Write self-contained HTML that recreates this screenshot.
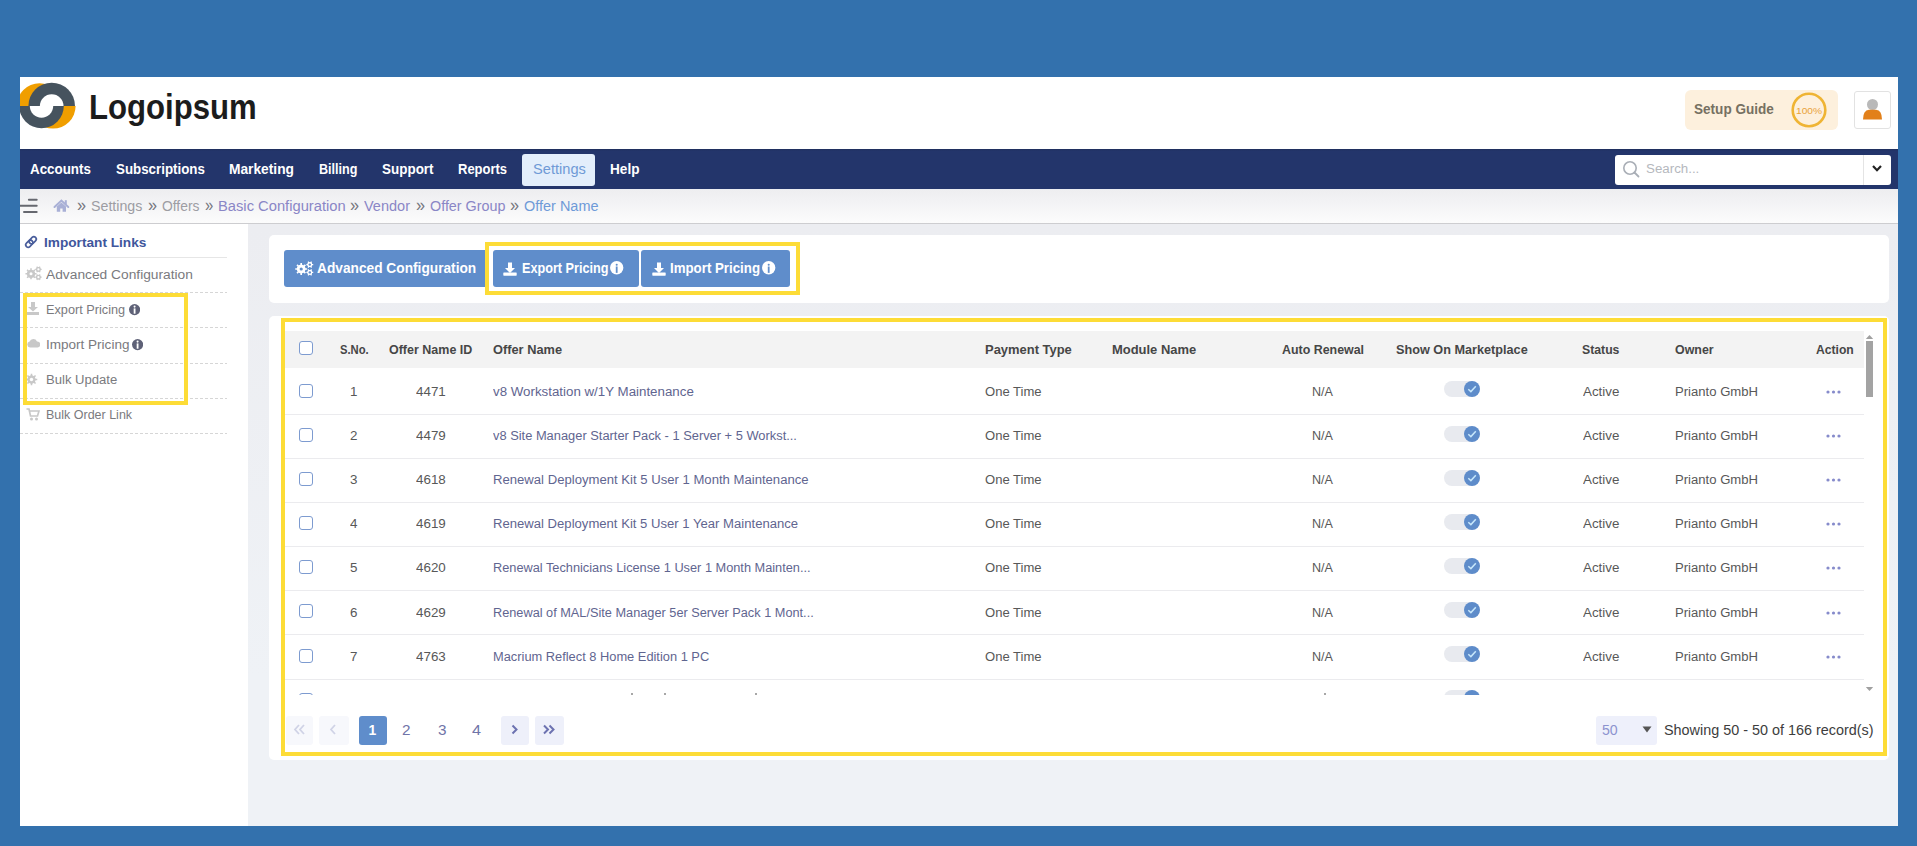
<!DOCTYPE html>
<html><head><meta charset="utf-8">
<style>
*{margin:0;padding:0;box-sizing:border-box}
html,body{width:1917px;height:846px;overflow:hidden;background:#3371ad;font-family:"Liberation Sans",sans-serif}
.a{position:absolute}
.t{position:absolute;white-space:nowrap;transform-origin:0 0}
#frame{position:absolute;left:20px;top:77px;width:1878px;height:749px;background:linear-gradient(#ecedf1 150px,#eff2f6 600px);overflow:hidden}
</style></head>
<body>
<div id="frame">
<div class="a" style="left:0.00px;top:0.00px;width:1878.00px;height:73.00px;background:#fff"></div>
<svg class="a" style="left:-2.00px;top:1.00px" width="62" height="56" viewBox="0 0 62 56">
<defs><clipPath id="ct"><rect x="0" y="0" width="62" height="28"/></clipPath><clipPath id="cb"><rect x="0" y="28" width="62" height="28"/></clipPath></defs>
<g clip-path="url(#ct)"><circle cx="21.5" cy="28" r="22.8" fill="#f09e00"/><circle cx="33.7" cy="28" r="23.3" fill="#46535e"/><circle cx="33.7" cy="28" r="11.8" fill="#fff"/></g>
<g clip-path="url(#cb)"><circle cx="35" cy="28" r="22.6" fill="#f09e00"/><circle cx="23.5" cy="28" r="22.3" fill="#46535e"/><circle cx="23.5" cy="28" r="11.7" fill="#fff"/></g>
</svg>
<div class="t" style="left:69.00px;top:12.10px;font-size:35.32px;line-height:35.32px;font-weight:bold;color:#1c1c1c;transform:scaleX(0.882);letter-spacing:0px">Logoipsum</div>
<div class="a" style="left:1665.00px;top:13.00px;width:153.00px;height:40.00px;background:#fdf0dd;border-radius:6px"></div>
<div class="t" style="left:1674.00px;top:24.50px;font-size:14.53px;line-height:14.53px;font-weight:bold;color:#767062;transform:scaleX(0.934);">Setup Guide</div>
<svg class="a" style="left:1771.00px;top:15.00px" width="36" height="36" viewBox="0 0 36 36"><circle cx="18" cy="18" r="16.3" fill="none" stroke="#efb434" stroke-width="2.6"/><text x="18" y="21.5" text-anchor="middle" font-family="Liberation Sans" font-size="9.5" fill="#e9a23a" textLength="26" lengthAdjust="spacingAndGlyphs">100%</text></svg>
<div class="a" style="left:1834.00px;top:14.00px;width:37.00px;height:37.50px;background:#fff;border:1px solid #e2e2e2;border-radius:3px"></div>
<svg class="a" style="left:1842.00px;top:20.00px" width="21" height="24" viewBox="0 0 21 24"><circle cx="10.5" cy="7.5" r="5.5" fill="#b9b9b9"/><path d="M1,22.5 Q1,13.5 7,12.8 L14,12.8 Q20,13.5 20,22.5 Z" fill="#e2801a"/></svg>
<div class="a" style="left:0.00px;top:72.40px;width:1878.00px;height:40.10px;background:linear-gradient(#1f2e5c,#23356b 2px)"></div>
<div class="a" style="left:501.60px;top:76.80px;width:73.20px;height:31.90px;background:#e3eefb;border-radius:3px"></div>
<div class="t" style="left:10.00px;top:85.10px;font-size:14.53px;line-height:14.53px;font-weight:bold;color:#ffffff;transform:scaleX(0.921);">Accounts</div>
<div class="t" style="left:95.50px;top:85.10px;font-size:14.53px;line-height:14.53px;font-weight:bold;color:#ffffff;transform:scaleX(0.918);">Subscriptions</div>
<div class="t" style="left:208.70px;top:85.10px;font-size:14.53px;line-height:14.53px;font-weight:bold;color:#ffffff;transform:scaleX(0.948);">Marketing</div>
<div class="t" style="left:298.80px;top:85.10px;font-size:14.53px;line-height:14.53px;font-weight:bold;color:#ffffff;transform:scaleX(0.867);">Billing</div>
<div class="t" style="left:362.00px;top:85.10px;font-size:14.53px;line-height:14.53px;font-weight:bold;color:#ffffff;transform:scaleX(0.927);">Support</div>
<div class="t" style="left:438.30px;top:85.10px;font-size:14.53px;line-height:14.53px;font-weight:bold;color:#ffffff;transform:scaleX(0.895);">Reports</div>
<div class="t" style="left:589.50px;top:85.10px;font-size:14.53px;line-height:14.53px;font-weight:bold;color:#ffffff;transform:scaleX(0.937);">Help</div>
<div class="t" style="left:512.50px;top:85.10px;font-size:14.53px;line-height:14.53px;font-weight:normal;color:#6f9ad6;transform:scaleX(1.007);font-weight:normal">Settings</div>
<div class="a" style="left:1595.00px;top:78.00px;width:275.50px;height:29.50px;background:#fff;border-radius:3px"></div>
<div class="a" style="left:1843.00px;top:78.00px;width:1.00px;height:29.50px;background:#e4e4e4"></div>
<svg class="a" style="left:1602.00px;top:83.00px" width="19" height="19" viewBox="0 0 19 19"><circle cx="8" cy="8" r="6.2" fill="none" stroke="#a9aeb6" stroke-width="1.6"/><path d="M12.5,12.5 L16.5,16.5" stroke="#a9aeb6" stroke-width="1.8" stroke-linecap="round"/></svg>
<div class="t" style="left:1626.30px;top:85.43px;font-size:13.66px;line-height:13.66px;font-weight:normal;color:#b5b8bd;transform:scaleX(0.975);">Search...</div>
<svg class="a" style="left:1851.00px;top:87.00px" width="12" height="9" viewBox="0 0 12 9"><path d="M2,2 L6,6.2 L10,2" fill="none" stroke="#222" stroke-width="2.2"/></svg>
<div class="a" style="left:0.00px;top:112.50px;width:1878.00px;height:33.50px;background:linear-gradient(#eeeef0,#f3f3f5 40%,#fcfcfc)"></div>
<div class="a" style="left:0.00px;top:146.00px;width:1878.00px;height:1.00px;background:#cdcdd0"></div>
<svg class="a" style="left:-2.00px;top:119.00px" width="22" height="19" viewBox="0 0 22 19"><g stroke="#66686f" stroke-width="2" stroke-linecap="round"><path d="M10.9,3.8 L18.7,3.8"/><path d="M1,9.7 L18.7,9.7"/><path d="M6,15.9 L18.7,15.9"/></g></svg>
<svg class="a" style="left:33.00px;top:121.00px" width="17" height="15" viewBox="0 0 17 15"><path d="M1.5,9 L8.4,2.6 L15.3,9" fill="none" stroke="#a9b0d6" stroke-width="2" stroke-linecap="round"/><rect x="11.8" y="2.2" width="2" height="4" fill="#a9b0d6"/><path d="M3.8,8.6 L8.4,4.5 L13,8.6 L13,13.7 L9.6,13.7 L9.6,10.6 L7.2,10.6 L7.2,13.7 L3.8,13.7 Z" fill="#a9b0d6"/></svg>
<div class="t" style="left:57.00px;top:119.32px;font-size:18.17px;line-height:18.17px;font-weight:normal;color:#77777f;transform:scaleX(0.893);">»</div>
<div class="t" style="left:71.00px;top:122.51px;font-size:13.81px;line-height:13.81px;font-weight:normal;color:#9d9da3;transform:scaleX(1.030);">Settings</div>
<div class="t" style="left:128.00px;top:119.32px;font-size:18.17px;line-height:18.17px;font-weight:normal;color:#77777f;transform:scaleX(0.893);">»</div>
<div class="t" style="left:141.50px;top:122.51px;font-size:13.81px;line-height:13.81px;font-weight:normal;color:#9d9da3;transform:scaleX(1.004);">Offers</div>
<div class="t" style="left:184.80px;top:119.32px;font-size:18.17px;line-height:18.17px;font-weight:normal;color:#77777f;transform:scaleX(0.813);">»</div>
<div class="t" style="left:198.30px;top:122.51px;font-size:13.81px;line-height:13.81px;font-weight:normal;color:#8a86c6;transform:scaleX(1.067);">Basic Configuration</div>
<div class="t" style="left:330.00px;top:119.32px;font-size:18.17px;line-height:18.17px;font-weight:normal;color:#77777f;transform:scaleX(0.893);">»</div>
<div class="t" style="left:344.00px;top:122.51px;font-size:13.81px;line-height:13.81px;font-weight:normal;color:#8a86c6;transform:scaleX(1.051);">Vendor</div>
<div class="t" style="left:396.00px;top:119.32px;font-size:18.17px;line-height:18.17px;font-weight:normal;color:#77777f;transform:scaleX(0.893);">»</div>
<div class="t" style="left:409.50px;top:122.51px;font-size:13.81px;line-height:13.81px;font-weight:normal;color:#8a86c6;transform:scaleX(1.040);">Offer Group</div>
<div class="t" style="left:490.00px;top:119.32px;font-size:18.17px;line-height:18.17px;font-weight:normal;color:#77777f;transform:scaleX(0.893);">»</div>
<div class="t" style="left:504.00px;top:122.51px;font-size:13.81px;line-height:13.81px;font-weight:normal;color:#6e9ad8;transform:scaleX(1.048);">Offer Name</div>
<div class="a" style="left:0.00px;top:147.00px;width:227.50px;height:602.00px;background:#fff"></div>
<svg class="a" style="left:3.00px;top:157.00px" width="16" height="16" viewBox="0 0 16 16"><g transform="rotate(-45 8 8)" fill="none" stroke="#4a5e9c" stroke-width="1.7"><rect x="1.6" y="5.6" width="8" height="4.8" rx="2.4"/><rect x="6.4" y="5.6" width="8" height="4.8" rx="2.4"/></g></svg>
<div class="t" style="left:24.20px;top:158.86px;font-size:13.52px;line-height:13.52px;font-weight:bold;color:#40569c;transform:scaleX(1.010);">Important Links</div>
<div class="a" style="left:0.00px;top:180.00px;width:206.60px;height:1.30px;background:#e6e6e6"></div>
<div class="t" style="left:26.00px;top:191.90px;font-size:12.65px;line-height:12.65px;font-weight:normal;color:#7a7a7e;transform:scaleX(1.089);">Advanced Configuration</div>
<div class="t" style="left:26.00px;top:226.50px;font-size:12.65px;line-height:12.65px;font-weight:normal;color:#7a7a7e;transform:scaleX(1.006);">Export Pricing</div>
<div class="t" style="left:25.70px;top:261.60px;font-size:12.65px;line-height:12.65px;font-weight:normal;color:#7a7a7e;transform:scaleX(1.070);">Import Pricing</div>
<div class="t" style="left:26.00px;top:296.70px;font-size:12.65px;line-height:12.65px;font-weight:normal;color:#7a7a7e;transform:scaleX(1.035);">Bulk Update</div>
<div class="t" style="left:26.00px;top:331.90px;font-size:12.65px;line-height:12.65px;font-weight:normal;color:#7a7a7e;transform:scaleX(0.988);">Bulk Order Link</div>
<div class="a" style="left:0.00px;top:215.00px;width:207.00px;height:1.00px;background-image:linear-gradient(90deg,#d6d6d6 60%,transparent 60%);background-size:5px 1px"></div>
<div class="a" style="left:0.00px;top:250.00px;width:207.00px;height:1.00px;background-image:linear-gradient(90deg,#d6d6d6 60%,transparent 60%);background-size:5px 1px"></div>
<div class="a" style="left:0.00px;top:286.00px;width:207.00px;height:1.00px;background-image:linear-gradient(90deg,#d6d6d6 60%,transparent 60%);background-size:5px 1px"></div>
<div class="a" style="left:0.00px;top:321.00px;width:207.00px;height:1.00px;background-image:linear-gradient(90deg,#d6d6d6 60%,transparent 60%);background-size:5px 1px"></div>
<div class="a" style="left:0.00px;top:356.00px;width:207.00px;height:1.00px;background-image:linear-gradient(90deg,#d6d6d6 60%,transparent 60%);background-size:5px 1px"></div>
<svg class="a" style="left:5.00px;top:189.00px" width="17" height="15" viewBox="0 0 17 15"><path d="M9.92,7.02 L11.55,7.03 L11.55,8.57 L9.92,8.58 L9.33,10.02 L10.46,11.18 L9.38,12.26 L8.22,11.13 L6.78,11.72 L6.77,13.35 L5.23,13.35 L5.22,11.72 L3.78,11.13 L2.62,12.26 L1.54,11.18 L2.67,10.02 L2.08,8.58 L0.45,8.57 L0.45,7.03 L2.08,7.02 L2.67,5.58 L1.54,4.42 L2.62,3.34 L3.78,4.47 L5.22,3.88 L5.23,2.25 L6.77,2.25 L6.78,3.88 L8.22,4.47 L9.38,3.34 L10.46,4.42 L9.33,5.58 Z" fill="#c8c8c8"/><circle cx="6" cy="7.8" r="3.92" fill="#c8c8c8"/><circle cx="6" cy="7.8" r="1.5" fill="#fff"/><path d="M15.72,2.78 L16.64,2.80 L16.64,4.00 L15.72,4.02 L15.10,5.10 L15.54,5.91 L14.50,6.51 L14.02,5.72 L12.78,5.72 L12.30,6.51 L11.26,5.91 L11.70,5.10 L11.08,4.02 L10.16,4.00 L10.16,2.80 L11.08,2.78 L11.70,1.70 L11.26,0.89 L12.30,0.29 L12.78,1.08 L14.02,1.08 L14.50,0.29 L15.54,0.89 L15.10,1.70 Z" fill="#c8c8c8"/><circle cx="13.4" cy="3.4" r="2.35" fill="#c8c8c8"/><circle cx="13.4" cy="3.4" r="1.1" fill="#fff"/><path d="M15.72,10.58 L16.64,10.60 L16.64,11.80 L15.72,11.82 L15.10,12.90 L15.54,13.71 L14.50,14.31 L14.02,13.52 L12.78,13.52 L12.30,14.31 L11.26,13.71 L11.70,12.90 L11.08,11.82 L10.16,11.80 L10.16,10.60 L11.08,10.58 L11.70,9.50 L11.26,8.69 L12.30,8.09 L12.78,8.88 L14.02,8.88 L14.50,8.09 L15.54,8.69 L15.10,9.50 Z" fill="#c8c8c8"/><circle cx="13.4" cy="11.2" r="2.35" fill="#c8c8c8"/><circle cx="13.4" cy="11.2" r="1.1" fill="#fff"/></svg>
<svg class="a" style="left:7.00px;top:225.00px" width="12" height="13" viewBox="0 0 12 13"><path d="M4,0 L8,0 L8,5 L11,5 L6,9.5 L1,5 L4,5 Z" fill="#c8c8c8"/><rect x="0" y="10" width="12" height="3" fill="#c8c8c8"/></svg>
<svg class="a" style="left:7.00px;top:261.00px" width="13" height="10" viewBox="0 0 13 10"><path d="M3,9.5 A3,3 0 0 1 2.6,3.6 A4,4 0 0 1 10,3.5 A3,3 0 0 1 10.5,9.5 Z" fill="#c8c8c8"/></svg>
<svg class="a" style="left:5.00px;top:296.00px" width="14" height="14" viewBox="0 0 14 14"><path d="M10.42,5.72 L12.25,5.71 L12.25,7.29 L10.42,7.28 L9.83,8.72 L11.12,10.00 L10.00,11.12 L8.72,9.83 L7.28,10.42 L7.29,12.25 L5.71,12.25 L5.72,10.42 L4.28,9.83 L3.00,11.12 L1.88,10.00 L3.17,8.72 L2.58,7.28 L0.75,7.29 L0.75,5.71 L2.58,5.72 L3.17,4.28 L1.88,3.00 L3.00,1.88 L4.28,3.17 L5.72,2.58 L5.71,0.75 L7.29,0.75 L7.28,2.58 L8.72,3.17 L10.00,1.88 L11.12,3.00 L9.83,4.28 Z" fill="#c8c8c8"/><circle cx="6.5" cy="6.5" r="3.92" fill="#c8c8c8"/><circle cx="6.5" cy="6.5" r="1.7" fill="#fff"/></svg>
<svg class="a" style="left:6.00px;top:331.00px" width="14" height="13" viewBox="0 0 14 13"><path d="M0.5,1 L3,1 L4.5,8 L11.5,8 L13,3 L3.8,3" fill="none" stroke="#c8c8c8" stroke-width="1.7"/><circle cx="5.5" cy="11" r="1.5" fill="#c8c8c8"/><circle cx="10.5" cy="11" r="1.5" fill="#c8c8c8"/></svg>
<svg class="a" style="left:108.60px;top:227.40px" width="11.2" height="11.2" viewBox="0 0 11.2 11.2"><circle cx="5.6" cy="5.6" r="5.6" fill="#5e6177"/><rect x="4.699999999999999" y="4.3999999999999995" width="1.8" height="5.32" fill="#fff"/><circle cx="5.6" cy="2.5999999999999996" r="1.05" fill="#fff"/></svg>
<svg class="a" style="left:111.90px;top:262.40px" width="11.2" height="11.2" viewBox="0 0 11.2 11.2"><circle cx="5.6" cy="5.6" r="5.6" fill="#5e6177"/><rect x="4.699999999999999" y="4.3999999999999995" width="1.8" height="5.32" fill="#fff"/><circle cx="5.6" cy="2.5999999999999996" r="1.05" fill="#fff"/></svg>
<div class="a" style="left:249.40px;top:158.40px;width:1620.10px;height:67.40px;background:#fff;border-radius:5px"></div>
<div class="a" style="left:249.40px;top:239.00px;width:1620.10px;height:443.70px;background:#fff;border-radius:5px"></div>
<div class="a" style="left:264.40px;top:173.20px;width:202.60px;height:36.70px;background:#5f8dcb;border-radius:3px 0 0 3px"></div>
<div class="a" style="left:472.70px;top:173.20px;width:146.30px;height:36.70px;background:#5f8dcb;border-radius:3px"></div>
<div class="a" style="left:621.40px;top:173.20px;width:149.00px;height:36.70px;background:#5f8dcb;border-radius:3px"></div>
<div class="t" style="left:296.50px;top:184.17px;font-size:14.10px;line-height:14.10px;font-weight:bold;color:#fff;transform:scaleX(0.973);font-weight:bold">Advanced Configuration</div>
<div class="t" style="left:501.50px;top:184.17px;font-size:14.10px;line-height:14.10px;font-weight:bold;color:#fff;transform:scaleX(0.898);">Export Pricing</div>
<div class="t" style="left:649.70px;top:184.17px;font-size:14.10px;line-height:14.10px;font-weight:bold;color:#fff;transform:scaleX(0.942);">Import Pricing</div>
<svg class="a" style="left:274.50px;top:184.00px" width="19" height="15" viewBox="0 0 19 15"><path d="M10.42,7.16 L12.14,7.18 L12.14,8.82 L10.42,8.84 L9.78,10.39 L10.98,11.62 L9.82,12.78 L8.59,11.58 L7.04,12.22 L7.02,13.94 L5.38,13.94 L5.36,12.22 L3.81,11.58 L2.58,12.78 L1.42,11.62 L2.62,10.39 L1.98,8.84 L0.26,8.82 L0.26,7.18 L1.98,7.16 L2.62,5.61 L1.42,4.38 L2.58,3.22 L3.81,4.42 L5.36,3.78 L5.38,2.06 L7.02,2.06 L7.04,3.78 L8.59,4.42 L9.82,3.22 L10.98,4.38 L9.78,5.61 Z" fill="#fff"/><circle cx="6.2" cy="8" r="4.21" fill="#fff"/><circle cx="6.2" cy="8" r="1.6" fill="#5f8dcb"/><path d="M17.21,2.95 L18.24,2.96 L18.24,4.24 L17.21,4.25 L16.57,5.37 L17.07,6.26 L15.97,6.90 L15.45,6.01 L14.15,6.01 L13.63,6.90 L12.53,6.26 L13.03,5.37 L12.39,4.25 L11.36,4.24 L11.36,2.96 L12.39,2.95 L13.03,1.83 L12.53,0.94 L13.63,0.30 L14.15,1.19 L15.45,1.19 L15.97,0.30 L17.07,0.94 L16.57,1.83 Z" fill="#fff"/><circle cx="14.8" cy="3.6" r="2.45" fill="#fff"/><circle cx="14.8" cy="3.6" r="1.2" fill="#5f8dcb"/><path d="M17.21,10.75 L18.24,10.76 L18.24,12.04 L17.21,12.05 L16.57,13.17 L17.07,14.06 L15.97,14.70 L15.45,13.81 L14.15,13.81 L13.63,14.70 L12.53,14.06 L13.03,13.17 L12.39,12.05 L11.36,12.04 L11.36,10.76 L12.39,10.75 L13.03,9.63 L12.53,8.74 L13.63,8.10 L14.15,8.99 L15.45,8.99 L15.97,8.10 L17.07,8.74 L16.57,9.63 Z" fill="#fff"/><circle cx="14.8" cy="11.4" r="2.45" fill="#fff"/><circle cx="14.8" cy="11.4" r="1.2" fill="#5f8dcb"/></svg>
<svg class="a" style="left:483.40px;top:184.50px" width="14" height="14" viewBox="0 0 14 14"><path d="M5,0.5 L9,0.5 L9,6 L12,6 L7,11 L2,6 L5,6 Z" fill="#fff"/><rect x="0.3" y="10.5" width="13.4" height="3.2" rx="0.6" fill="#fff"/></svg>
<svg class="a" style="left:631.50px;top:184.50px" width="14" height="14" viewBox="0 0 14 14"><path d="M5,0.5 L9,0.5 L9,6 L12,6 L7,11 L2,6 L5,6 Z" fill="#fff"/><rect x="0.3" y="10.5" width="13.4" height="3.2" rx="0.6" fill="#fff"/></svg>
<svg class="a" style="left:590.30px;top:184.30px" width="13.4" height="13.4" viewBox="0 0 13.4 13.4"><circle cx="6.7" cy="6.7" r="6.7" fill="#fff"/><rect x="5.8" y="5.5" width="1.8" height="6.37" fill="#5f8dcb"/><circle cx="6.7" cy="3.7" r="1.05" fill="#5f8dcb"/></svg>
<svg class="a" style="left:742.30px;top:184.30px" width="13.4" height="13.4" viewBox="0 0 13.4 13.4"><circle cx="6.7" cy="6.7" r="6.7" fill="#fff"/><rect x="5.8" y="5.5" width="1.8" height="6.37" fill="#5f8dcb"/><circle cx="6.7" cy="3.7" r="1.05" fill="#5f8dcb"/></svg>
<div class="a" style="left:265.00px;top:253.50px;width:1578.80px;height:37.70px;background:#f3f3f3"></div>
<div class="t" style="left:319.60px;top:265.73px;font-size:13.08px;line-height:13.08px;font-weight:bold;color:#464646;transform:scaleX(0.859);">S.No.</div>
<div class="t" style="left:369.00px;top:265.73px;font-size:13.08px;line-height:13.08px;font-weight:bold;color:#464646;transform:scaleX(0.955);">Offer Name ID</div>
<div class="t" style="left:472.80px;top:265.73px;font-size:13.08px;line-height:13.08px;font-weight:bold;color:#464646;transform:scaleX(0.979);">Offer Name</div>
<div class="t" style="left:964.90px;top:265.73px;font-size:13.08px;line-height:13.08px;font-weight:bold;color:#464646;transform:scaleX(0.990);">Payment Type</div>
<div class="t" style="left:1091.80px;top:265.73px;font-size:13.08px;line-height:13.08px;font-weight:bold;color:#464646;transform:scaleX(0.990);">Module Name</div>
<div class="t" style="left:1261.50px;top:265.73px;font-size:13.08px;line-height:13.08px;font-weight:bold;color:#464646;transform:scaleX(0.949);">Auto Renewal</div>
<div class="t" style="left:1376.20px;top:265.73px;font-size:13.08px;line-height:13.08px;font-weight:bold;color:#464646;transform:scaleX(0.969);">Show On Marketplace</div>
<div class="t" style="left:1562.00px;top:265.73px;font-size:13.08px;line-height:13.08px;font-weight:bold;color:#464646;transform:scaleX(0.936);">Status</div>
<div class="t" style="left:1654.70px;top:265.73px;font-size:13.08px;line-height:13.08px;font-weight:bold;color:#464646;transform:scaleX(0.949);">Owner</div>
<div class="t" style="left:1795.60px;top:265.73px;font-size:13.08px;line-height:13.08px;font-weight:bold;color:#464646;transform:scaleX(0.929);">Action</div>
<div class="a" style="left:279.30px;top:264.30px;width:14.10px;height:14.10px;border:1.6px solid #7d9bd0;border-radius:3px;background:#fff"></div>
<div class="a" style="left:0;top:0;width:1878px;height:618px;overflow:hidden"><div class="a" style="left:265.00px;top:337.00px;width:1578.80px;height:1.00px;background:#ebebee"></div><div class="a" style="left:279.30px;top:306.80px;width:14.10px;height:14.10px;border:1.6px solid #7d9bd0;border-radius:3px;background:#fff"></div><div class="t" style="left:330.09px;top:308.92px;font-size:12.50px;line-height:12.50px;font-weight:normal;color:#585858;transform:scaleX(1.070);">1</div><div class="t" style="left:395.72px;top:308.92px;font-size:12.50px;line-height:12.50px;font-weight:normal;color:#585858;transform:scaleX(1.070);">4471</div><div class="t" style="left:472.80px;top:308.92px;font-size:12.50px;line-height:12.50px;font-weight:normal;color:#5f6590;transform:scaleX(1.065);">v8 Workstation w/1Y Maintenance</div><div class="t" style="left:965.00px;top:308.92px;font-size:12.50px;line-height:12.50px;font-weight:normal;color:#585858;transform:scaleX(1.045);">One Time</div><div class="t" style="left:1292.00px;top:308.92px;font-size:12.50px;line-height:12.50px;font-weight:normal;color:#585858;transform:scaleX(1.006);">N/A</div><div class="t" style="left:1563.00px;top:308.92px;font-size:12.50px;line-height:12.50px;font-weight:normal;color:#585858;transform:scaleX(1.069);">Active</div><div class="t" style="left:1654.70px;top:308.92px;font-size:12.50px;line-height:12.50px;font-weight:normal;color:#585858;transform:scaleX(1.048);">Prianto GmbH</div><div class="a" style="left:1424.20px;top:304.40px;width:33.80px;height:16.00px;background:#e8eaef;border-radius:8px"></div><svg class="a" style="left:1444.00px;top:304.40px" width="16" height="16" viewBox="0 0 16 16"><circle cx="8" cy="8" r="8" fill="#5e8cca"/><path d="M4.3,8.2 L6.9,10.6 L11.8,5.3" fill="none" stroke="#c6e6fb" stroke-width="1.5"/></svg><svg class="a" style="left:1805.50px;top:312.90px" width="15" height="4" viewBox="0 0 15 4"><circle cx="2" cy="2" r="1.6" fill="#868bcb"/><circle cx="7.5" cy="2" r="1.6" fill="#868bcb"/><circle cx="13" cy="2" r="1.6" fill="#868bcb"/></svg><div class="a" style="left:265.00px;top:381.00px;width:1578.80px;height:1.00px;background:#ebebee"></div><div class="a" style="left:279.30px;top:350.92px;width:14.10px;height:14.10px;border:1.6px solid #7d9bd0;border-radius:3px;background:#fff"></div><div class="t" style="left:330.09px;top:353.04px;font-size:12.50px;line-height:12.50px;font-weight:normal;color:#585858;transform:scaleX(1.070);">2</div><div class="t" style="left:395.72px;top:353.04px;font-size:12.50px;line-height:12.50px;font-weight:normal;color:#585858;transform:scaleX(1.070);">4479</div><div class="t" style="left:472.80px;top:353.04px;font-size:12.50px;line-height:12.50px;font-weight:normal;color:#5f6590;transform:scaleX(1.029);">v8 Site Manager Starter Pack - 1 Server + 5 Workst...</div><div class="t" style="left:965.00px;top:353.04px;font-size:12.50px;line-height:12.50px;font-weight:normal;color:#585858;transform:scaleX(1.045);">One Time</div><div class="t" style="left:1292.00px;top:353.04px;font-size:12.50px;line-height:12.50px;font-weight:normal;color:#585858;transform:scaleX(1.006);">N/A</div><div class="t" style="left:1563.00px;top:353.04px;font-size:12.50px;line-height:12.50px;font-weight:normal;color:#585858;transform:scaleX(1.069);">Active</div><div class="t" style="left:1654.70px;top:353.04px;font-size:12.50px;line-height:12.50px;font-weight:normal;color:#585858;transform:scaleX(1.048);">Prianto GmbH</div><div class="a" style="left:1424.20px;top:348.52px;width:33.80px;height:16.00px;background:#e8eaef;border-radius:8px"></div><svg class="a" style="left:1444.00px;top:348.52px" width="16" height="16" viewBox="0 0 16 16"><circle cx="8" cy="8" r="8" fill="#5e8cca"/><path d="M4.3,8.2 L6.9,10.6 L11.8,5.3" fill="none" stroke="#c6e6fb" stroke-width="1.5"/></svg><svg class="a" style="left:1805.50px;top:357.02px" width="15" height="4" viewBox="0 0 15 4"><circle cx="2" cy="2" r="1.6" fill="#868bcb"/><circle cx="7.5" cy="2" r="1.6" fill="#868bcb"/><circle cx="13" cy="2" r="1.6" fill="#868bcb"/></svg><div class="a" style="left:265.00px;top:425.00px;width:1578.80px;height:1.00px;background:#ebebee"></div><div class="a" style="left:279.30px;top:395.04px;width:14.10px;height:14.10px;border:1.6px solid #7d9bd0;border-radius:3px;background:#fff"></div><div class="t" style="left:330.09px;top:397.16px;font-size:12.50px;line-height:12.50px;font-weight:normal;color:#585858;transform:scaleX(1.070);">3</div><div class="t" style="left:395.72px;top:397.16px;font-size:12.50px;line-height:12.50px;font-weight:normal;color:#585858;transform:scaleX(1.070);">4618</div><div class="t" style="left:472.80px;top:397.16px;font-size:12.50px;line-height:12.50px;font-weight:normal;color:#5f6590;transform:scaleX(1.049);">Renewal Deployment Kit 5 User 1 Month Maintenance</div><div class="t" style="left:965.00px;top:397.16px;font-size:12.50px;line-height:12.50px;font-weight:normal;color:#585858;transform:scaleX(1.045);">One Time</div><div class="t" style="left:1292.00px;top:397.16px;font-size:12.50px;line-height:12.50px;font-weight:normal;color:#585858;transform:scaleX(1.006);">N/A</div><div class="t" style="left:1563.00px;top:397.16px;font-size:12.50px;line-height:12.50px;font-weight:normal;color:#585858;transform:scaleX(1.069);">Active</div><div class="t" style="left:1654.70px;top:397.16px;font-size:12.50px;line-height:12.50px;font-weight:normal;color:#585858;transform:scaleX(1.048);">Prianto GmbH</div><div class="a" style="left:1424.20px;top:392.64px;width:33.80px;height:16.00px;background:#e8eaef;border-radius:8px"></div><svg class="a" style="left:1444.00px;top:392.64px" width="16" height="16" viewBox="0 0 16 16"><circle cx="8" cy="8" r="8" fill="#5e8cca"/><path d="M4.3,8.2 L6.9,10.6 L11.8,5.3" fill="none" stroke="#c6e6fb" stroke-width="1.5"/></svg><svg class="a" style="left:1805.50px;top:401.14px" width="15" height="4" viewBox="0 0 15 4"><circle cx="2" cy="2" r="1.6" fill="#868bcb"/><circle cx="7.5" cy="2" r="1.6" fill="#868bcb"/><circle cx="13" cy="2" r="1.6" fill="#868bcb"/></svg><div class="a" style="left:265.00px;top:469.00px;width:1578.80px;height:1.00px;background:#ebebee"></div><div class="a" style="left:279.30px;top:439.16px;width:14.10px;height:14.10px;border:1.6px solid #7d9bd0;border-radius:3px;background:#fff"></div><div class="t" style="left:330.09px;top:441.28px;font-size:12.50px;line-height:12.50px;font-weight:normal;color:#585858;transform:scaleX(1.070);">4</div><div class="t" style="left:395.72px;top:441.28px;font-size:12.50px;line-height:12.50px;font-weight:normal;color:#585858;transform:scaleX(1.070);">4619</div><div class="t" style="left:472.80px;top:441.28px;font-size:12.50px;line-height:12.50px;font-weight:normal;color:#5f6590;transform:scaleX(1.048);">Renewal Deployment Kit 5 User 1 Year Maintenance</div><div class="t" style="left:965.00px;top:441.28px;font-size:12.50px;line-height:12.50px;font-weight:normal;color:#585858;transform:scaleX(1.045);">One Time</div><div class="t" style="left:1292.00px;top:441.28px;font-size:12.50px;line-height:12.50px;font-weight:normal;color:#585858;transform:scaleX(1.006);">N/A</div><div class="t" style="left:1563.00px;top:441.28px;font-size:12.50px;line-height:12.50px;font-weight:normal;color:#585858;transform:scaleX(1.069);">Active</div><div class="t" style="left:1654.70px;top:441.28px;font-size:12.50px;line-height:12.50px;font-weight:normal;color:#585858;transform:scaleX(1.048);">Prianto GmbH</div><div class="a" style="left:1424.20px;top:436.76px;width:33.80px;height:16.00px;background:#e8eaef;border-radius:8px"></div><svg class="a" style="left:1444.00px;top:436.76px" width="16" height="16" viewBox="0 0 16 16"><circle cx="8" cy="8" r="8" fill="#5e8cca"/><path d="M4.3,8.2 L6.9,10.6 L11.8,5.3" fill="none" stroke="#c6e6fb" stroke-width="1.5"/></svg><svg class="a" style="left:1805.50px;top:445.26px" width="15" height="4" viewBox="0 0 15 4"><circle cx="2" cy="2" r="1.6" fill="#868bcb"/><circle cx="7.5" cy="2" r="1.6" fill="#868bcb"/><circle cx="13" cy="2" r="1.6" fill="#868bcb"/></svg><div class="a" style="left:265.00px;top:513.00px;width:1578.80px;height:1.00px;background:#ebebee"></div><div class="a" style="left:279.30px;top:483.28px;width:14.10px;height:14.10px;border:1.6px solid #7d9bd0;border-radius:3px;background:#fff"></div><div class="t" style="left:330.09px;top:485.40px;font-size:12.50px;line-height:12.50px;font-weight:normal;color:#585858;transform:scaleX(1.070);">5</div><div class="t" style="left:395.72px;top:485.40px;font-size:12.50px;line-height:12.50px;font-weight:normal;color:#585858;transform:scaleX(1.070);">4620</div><div class="t" style="left:472.80px;top:485.40px;font-size:12.50px;line-height:12.50px;font-weight:normal;color:#5f6590;transform:scaleX(1.021);">Renewal Technicians License 1 User 1 Month Mainten...</div><div class="t" style="left:965.00px;top:485.40px;font-size:12.50px;line-height:12.50px;font-weight:normal;color:#585858;transform:scaleX(1.045);">One Time</div><div class="t" style="left:1292.00px;top:485.40px;font-size:12.50px;line-height:12.50px;font-weight:normal;color:#585858;transform:scaleX(1.006);">N/A</div><div class="t" style="left:1563.00px;top:485.40px;font-size:12.50px;line-height:12.50px;font-weight:normal;color:#585858;transform:scaleX(1.069);">Active</div><div class="t" style="left:1654.70px;top:485.40px;font-size:12.50px;line-height:12.50px;font-weight:normal;color:#585858;transform:scaleX(1.048);">Prianto GmbH</div><div class="a" style="left:1424.20px;top:480.88px;width:33.80px;height:16.00px;background:#e8eaef;border-radius:8px"></div><svg class="a" style="left:1444.00px;top:480.88px" width="16" height="16" viewBox="0 0 16 16"><circle cx="8" cy="8" r="8" fill="#5e8cca"/><path d="M4.3,8.2 L6.9,10.6 L11.8,5.3" fill="none" stroke="#c6e6fb" stroke-width="1.5"/></svg><svg class="a" style="left:1805.50px;top:489.38px" width="15" height="4" viewBox="0 0 15 4"><circle cx="2" cy="2" r="1.6" fill="#868bcb"/><circle cx="7.5" cy="2" r="1.6" fill="#868bcb"/><circle cx="13" cy="2" r="1.6" fill="#868bcb"/></svg><div class="a" style="left:265.00px;top:557.00px;width:1578.80px;height:1.00px;background:#ebebee"></div><div class="a" style="left:279.30px;top:527.40px;width:14.10px;height:14.10px;border:1.6px solid #7d9bd0;border-radius:3px;background:#fff"></div><div class="t" style="left:330.09px;top:529.52px;font-size:12.50px;line-height:12.50px;font-weight:normal;color:#585858;transform:scaleX(1.070);">6</div><div class="t" style="left:395.72px;top:529.52px;font-size:12.50px;line-height:12.50px;font-weight:normal;color:#585858;transform:scaleX(1.070);">4629</div><div class="t" style="left:472.80px;top:529.52px;font-size:12.50px;line-height:12.50px;font-weight:normal;color:#5f6590;transform:scaleX(1.019);">Renewal of MAL/Site Manager 5er Server Pack 1 Mont...</div><div class="t" style="left:965.00px;top:529.52px;font-size:12.50px;line-height:12.50px;font-weight:normal;color:#585858;transform:scaleX(1.045);">One Time</div><div class="t" style="left:1292.00px;top:529.52px;font-size:12.50px;line-height:12.50px;font-weight:normal;color:#585858;transform:scaleX(1.006);">N/A</div><div class="t" style="left:1563.00px;top:529.52px;font-size:12.50px;line-height:12.50px;font-weight:normal;color:#585858;transform:scaleX(1.069);">Active</div><div class="t" style="left:1654.70px;top:529.52px;font-size:12.50px;line-height:12.50px;font-weight:normal;color:#585858;transform:scaleX(1.048);">Prianto GmbH</div><div class="a" style="left:1424.20px;top:525.00px;width:33.80px;height:16.00px;background:#e8eaef;border-radius:8px"></div><svg class="a" style="left:1444.00px;top:525.00px" width="16" height="16" viewBox="0 0 16 16"><circle cx="8" cy="8" r="8" fill="#5e8cca"/><path d="M4.3,8.2 L6.9,10.6 L11.8,5.3" fill="none" stroke="#c6e6fb" stroke-width="1.5"/></svg><svg class="a" style="left:1805.50px;top:533.50px" width="15" height="4" viewBox="0 0 15 4"><circle cx="2" cy="2" r="1.6" fill="#868bcb"/><circle cx="7.5" cy="2" r="1.6" fill="#868bcb"/><circle cx="13" cy="2" r="1.6" fill="#868bcb"/></svg><div class="a" style="left:265.00px;top:602.00px;width:1578.80px;height:1.00px;background:#ebebee"></div><div class="a" style="left:279.30px;top:571.52px;width:14.10px;height:14.10px;border:1.6px solid #7d9bd0;border-radius:3px;background:#fff"></div><div class="t" style="left:330.09px;top:573.64px;font-size:12.50px;line-height:12.50px;font-weight:normal;color:#585858;transform:scaleX(1.070);">7</div><div class="t" style="left:395.72px;top:573.64px;font-size:12.50px;line-height:12.50px;font-weight:normal;color:#585858;transform:scaleX(1.070);">4763</div><div class="t" style="left:472.80px;top:573.64px;font-size:12.50px;line-height:12.50px;font-weight:normal;color:#5f6590;transform:scaleX(1.027);">Macrium Reflect 8 Home Edition 1 PC</div><div class="t" style="left:965.00px;top:573.64px;font-size:12.50px;line-height:12.50px;font-weight:normal;color:#585858;transform:scaleX(1.045);">One Time</div><div class="t" style="left:1292.00px;top:573.64px;font-size:12.50px;line-height:12.50px;font-weight:normal;color:#585858;transform:scaleX(1.006);">N/A</div><div class="t" style="left:1563.00px;top:573.64px;font-size:12.50px;line-height:12.50px;font-weight:normal;color:#585858;transform:scaleX(1.069);">Active</div><div class="t" style="left:1654.70px;top:573.64px;font-size:12.50px;line-height:12.50px;font-weight:normal;color:#585858;transform:scaleX(1.048);">Prianto GmbH</div><div class="a" style="left:1424.20px;top:569.12px;width:33.80px;height:16.00px;background:#e8eaef;border-radius:8px"></div><svg class="a" style="left:1444.00px;top:569.12px" width="16" height="16" viewBox="0 0 16 16"><circle cx="8" cy="8" r="8" fill="#5e8cca"/><path d="M4.3,8.2 L6.9,10.6 L11.8,5.3" fill="none" stroke="#c6e6fb" stroke-width="1.5"/></svg><svg class="a" style="left:1805.50px;top:577.62px" width="15" height="4" viewBox="0 0 15 4"><circle cx="2" cy="2" r="1.6" fill="#868bcb"/><circle cx="7.5" cy="2" r="1.6" fill="#868bcb"/><circle cx="13" cy="2" r="1.6" fill="#868bcb"/></svg><div class="a" style="left:279.30px;top:615.64px;width:14.10px;height:14.10px;border:1.6px solid #7d9bd0;border-radius:3px;background:#fff"></div><div class="a" style="left:1424.20px;top:613.24px;width:33.80px;height:16.10px;background:#e8eaef;border-radius:8px"></div><svg class="a" style="left:1444.00px;top:613.24px" width="16" height="16" viewBox="0 0 16 16"><circle cx="8" cy="8" r="8" fill="#5e8cca"/></svg><div class="a" style="left:611.00px;top:616.40px;width:1.50px;height:1.60px;background:#8a8a8a;border-radius:1px"></div><div class="a" style="left:644.00px;top:616.40px;width:1.50px;height:1.60px;background:#8a8a8a;border-radius:1px"></div><div class="a" style="left:735.00px;top:616.40px;width:1.50px;height:1.60px;background:#8a8a8a;border-radius:1px"></div><div class="a" style="left:1304.00px;top:616.40px;width:1.50px;height:1.60px;background:#8a8a8a;border-radius:1px"></div></div>
<svg class="a" style="left:1845.00px;top:257.00px" width="9" height="6" viewBox="0 0 9 6"><path d="M0.8,5 L4.5,1 L8.2,5 Z" fill="#a0a0a0"/></svg>
<div class="a" style="left:1845.80px;top:264.20px;width:6.90px;height:56.20px;background:#a3a3a3"></div>
<svg class="a" style="left:1845.00px;top:609.00px" width="9" height="6" viewBox="0 0 9 6"><path d="M0.8,1 L4.5,5 L8.2,1 Z" fill="#a0a0a0"/></svg>
<div class="a" style="left:266.00px;top:639.00px;width:27.00px;height:29.00px;background:#f7f8fc;border-radius:3px"></div>
<div class="a" style="left:298.50px;top:639.00px;width:30.50px;height:29.00px;background:#f7f8fc;border-radius:3px"></div>
<div class="a" style="left:338.80px;top:639.00px;width:28.30px;height:29.00px;background:#5f8dcb;border-radius:3px"></div>
<div class="a" style="left:481.00px;top:639.00px;width:28.20px;height:29.00px;background:#eef0fa;border-radius:3px"></div>
<div class="a" style="left:514.80px;top:639.00px;width:28.80px;height:29.00px;background:#eef0fa;border-radius:3px"></div>
<div class="t" style="left:348.60px;top:647.49px;font-size:13.95px;line-height:13.95px;font-weight:bold;color:#fff;">1</div>
<div class="t" style="left:382.40px;top:647.49px;font-size:13.95px;line-height:13.95px;font-weight:normal;color:#7074a8;transform:scaleX(1.098);">2</div>
<div class="t" style="left:417.50px;top:647.49px;font-size:13.95px;line-height:13.95px;font-weight:normal;color:#7074a8;transform:scaleX(1.098);">3</div>
<div class="t" style="left:452.00px;top:647.49px;font-size:13.95px;line-height:13.95px;font-weight:normal;color:#7074a8;transform:scaleX(1.162);">4</div>
<svg class="a" style="left:273.00px;top:647.00px" width="13" height="11" viewBox="0 0 13 11"><path d="M6,1 L2,5.5 L6,10 M11,1 L7,5.5 L11,10" fill="none" stroke="#d0d3e6" stroke-width="1.8"/></svg>
<svg class="a" style="left:309.00px;top:647.00px" width="9" height="11" viewBox="0 0 9 11"><path d="M6,1 L2,5.5 L6,10" fill="none" stroke="#d0d3e6" stroke-width="1.8"/></svg>
<svg class="a" style="left:490.00px;top:647.00px" width="9" height="11" viewBox="0 0 9 11"><path d="M2.5,1.5 L6.5,5.5 L2.5,9.5" fill="none" stroke="#6c72b0" stroke-width="2"/></svg>
<svg class="a" style="left:522.00px;top:647.00px" width="14" height="11" viewBox="0 0 14 11"><path d="M2,1.5 L6,5.5 L2,9.5 M7.5,1.5 L11.5,5.5 L7.5,9.5" fill="none" stroke="#6c72b0" stroke-width="2"/></svg>
<div class="a" style="left:1576.30px;top:639.30px;width:60.70px;height:28.30px;background:#eef0fb;border-radius:3px"></div>
<div class="t" style="left:1582.30px;top:646.44px;font-size:14.24px;line-height:14.24px;font-weight:normal;color:#8c93cf;transform:scaleX(0.993);">50</div>
<svg class="a" style="left:1622.00px;top:649.00px" width="10" height="7" viewBox="0 0 10 7"><path d="M0.5,0.5 L9.5,0.5 L5,6.5 Z" fill="#555"/></svg>
<div class="t" style="left:1644.30px;top:645.28px;font-size:15.26px;line-height:15.26px;font-weight:normal;color:#3d3d3d;transform:scaleX(0.943);">Showing 50 - 50 of 166 record(s)</div>
<div class="a" style="left:465.10px;top:165.10px;width:314.50px;height:52.90px;border:4px solid #fddc36"></div>
<div class="a" style="left:261.00px;top:240.80px;width:1606.00px;height:438.00px;border:4px solid #fddc36"></div>
<div class="a" style="left:3.10px;top:216.20px;width:164.70px;height:111.60px;border:4px solid #fddc36"></div>
</div>
</body></html>
